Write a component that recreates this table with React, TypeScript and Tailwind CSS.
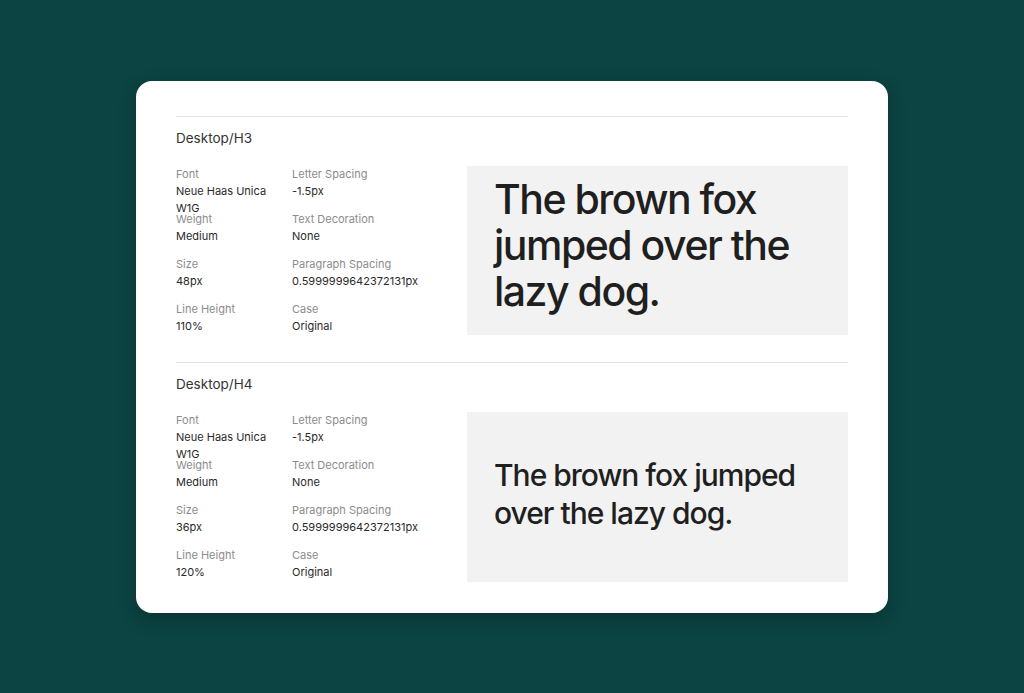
const fields = (size: string, lineHeight: string) => [
  { label: "Font", value: "Neue Haas Unica W1G" },
  { label: "Letter Spacing", value: "-1.5px" },
  { label: "Weight", value: "Medium" },
  { label: "Text Decoration", value: "None" },
  { label: "Size", value: size },
  { label: "Paragraph Spacing", value: "0.5999999642372131px" },
  { label: "Line Height", value: lineHeight },
  { label: "Case", value: "Original" },
];

const styles = [
  { name: "Desktop/H3", size: "48px", lineHeight: "110%", preview: "h3" },
  { name: "Desktop/H4", size: "36px", lineHeight: "120%", preview: "h4" },
];

const StyleBlock = ({ name, size, lineHeight, preview }: (typeof styles)[number]) => (
  <section className="border-t border-[#e3e3e3] pb-4">
    <h3 className="pt-3 text-[13.5px] leading-[18px] text-[#333333]">{name}</h3>
    <div className="mt-[19px] flex">
      {/* Spec grid */}
      <div className="grid w-[291px] shrink-0 grid-cols-[116px_1fr] auto-rows-[45px]">
        {fields(size, lineHeight).map((f, i) => (
          <div key={f.label} className="h-[45px] text-[11px]">
            <div className="leading-4 text-[#8c8c8c]">{f.label}</div>
            <div
              className={
                i % 2 === 0
                  ? "mt-[1px] w-[100px] leading-[17px] text-[#2a2a2a]"
                  : "mt-[1px] leading-[17px] text-[#2a2a2a]"
              }
            >
              {f.value}
            </div>
          </div>
        ))}
      </div>

      {/* Preview */}
      {preview === "h3" ? (
        <div className="flex h-[169px] flex-1 items-center bg-[#f2f2f2] pb-3 pl-[27px]">
          <p className="w-[320px] text-[41px] leading-[46px] font-[550] tracking-[-1.5px] text-[#1f1f1f]">
            The brown fox jumped over the lazy dog.
          </p>
        </div>
      ) : (
        <div className="flex h-[170px] flex-1 items-center bg-[#f2f2f2] pb-[6px] pl-[27px]">
          <p className="w-[320px] text-[30px] leading-[38px] font-[550] tracking-[-1px] text-[#1f1f1f]">
            The brown fox jumped over the lazy dog.
          </p>
        </div>
      )}
    </div>
  </section>
);

export default function App() {
  return (
    <div className="flex h-[693px] w-full items-start justify-center bg-[#0b4442] pt-[81px] font-['Inter','Liberation_Sans',sans-serif]">
      <div className="w-[752px] rounded-2xl bg-white px-10 pt-[35px] pb-[5px] shadow-[0_6px_18px_rgba(0,0,0,0.25)]">
        {styles.map((s) => (
          <StyleBlock key={s.name} {...s} />
        ))}
      </div>
    </div>
  );
}
